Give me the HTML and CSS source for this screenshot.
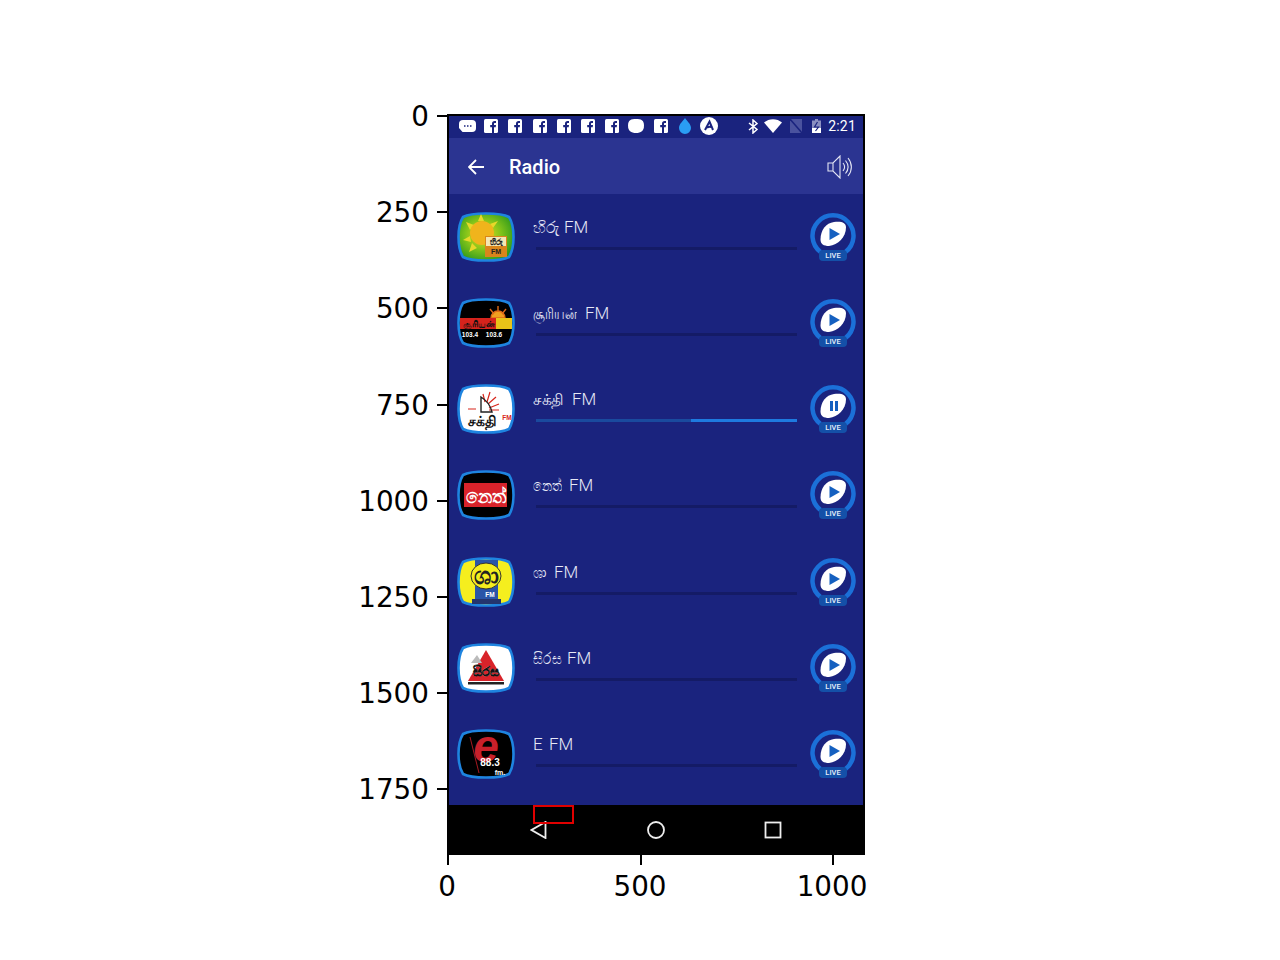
FILE: index.html
```html
<!DOCTYPE html>
<html lang="en">
<head>
  <meta charset="UTF-8">
  <meta name="viewport" content="width=device-width, initial-scale=1.0">
  <title>Radio</title>
  <link rel="stylesheet" href="styles.css">
</head>
<body>
  <svg class="defs" width="0" height="0">
    <defs>
      <radialGradient id="hiru-bg" cx="0.45" cy="0.45" r="0.6">
        <stop offset="0" stop-color="#e8e020"/>
        <stop offset="0.55" stop-color="#7fc21a"/>
        <stop offset="1" stop-color="#2f9a1c"/>
      </radialGradient>
    </defs>
    <symbol id="fb" viewBox="0 0 14 14">
      <rect width="14" height="14" rx="1.5" fill="#fff"/>
      <path d="M8 14V8.2H6.200V6H8V4.600C8 2.900 9 2 10.500 2H12v2.100h-1c-.8 0-1 .4-1 1V6h2l-.3 2.200H10V14z" fill="#1a237e"/>
    </symbol>
    <symbol id="shell" viewBox="0 0 58 50">
      <path d="M29 1.500C40 1.500 48 2.800 52 5C54.500 9 56.500 16 56.500 25C56.500 34 54.500 41 52 45C48 47.200 40 48.500 29 48.500C18 48.500 10 47.200 6 45C3.500 41 1.500 34 1.500 25C1.500 16 3.500 9 6 5C10 2.800 18 1.500 29 1.500Z" stroke="#1e84e0" stroke-width="2.600"/>
    </symbol>
    <symbol id="btn-ring" viewBox="0 0 46 50">
      <path d="M10.500 40A20.500 20.500 0 1 1 35.500 40" fill="none" stroke="#1b70d8" stroke-width="4.500"/>
      <path d="M24 10C32 9 36 11 36 15.500C36 25 28 33 19 34C13.500 34 10.500 32 10.500 27.500C10.500 18 16 11 24 10Z" fill="#fff"/>
      <rect x="9" y="38" width="28" height="11" rx="4" fill="#1450a8"/>
    </symbol>
  </svg>

  <main class="figure">
    <div class="axes">
      <div class="tick-y" style="top:-1px"><span>0</span></div>
      <div class="tick-y" style="top:95px"><span>250</span></div>
      <div class="tick-y" style="top:191px"><span>500</span></div>
      <div class="tick-y" style="top:288px"><span>750</span></div>
      <div class="tick-y" style="top:384px"><span>1000</span></div>
      <div class="tick-y" style="top:480px"><span>1250</span></div>
      <div class="tick-y" style="top:576px"><span>1500</span></div>
      <div class="tick-y" style="top:672px"><span>1750</span></div>

      <div class="status-bar">
        <div class="status-left">
          <div class="slot"><svg width="18" height="13" viewBox="0 0 18 13"><path d="M5 0h9a4 4 0 0 1 4 4v4a4 4 0 0 1-4 4H4.500L1 8V4a4 4 0 0 1 4-4z" fill="#fff"/><path d="M6 6h1.500M9 6h1.500M12 6h1.500" stroke="#1a237e" stroke-width="1.600"/></svg></div>
          <div class="slot"><svg class="fb"><use href="#fb"/></svg></div>
          <div class="slot"><svg class="fb"><use href="#fb"/></svg></div>
          <div class="slot"><svg class="fb"><use href="#fb"/></svg></div>
          <div class="slot"><svg class="fb"><use href="#fb"/></svg></div>
          <div class="slot"><svg class="fb"><use href="#fb"/></svg></div>
          <div class="slot"><svg class="fb"><use href="#fb"/></svg></div>
          <div class="slot"><svg width="16" height="14" viewBox="0 0 16 14"><path d="M8 0c5 0 8 1 8 6.500S13 14 8 14 0 12 0 6.500 3 0 8 0z" fill="#fff"/></svg></div>
          <div class="slot"><svg class="fb"><use href="#fb"/></svg></div>
          <div class="slot"><svg width="12" height="16" viewBox="0 0 12 16"><path d="M6 0c2 3 6 6 6 10a6 6 0 0 1-12 0C0 6 4 3 6 0z" fill="#2a9df4"/></svg></div>
          <div class="slot"><svg width="18" height="18" viewBox="0 0 18 18"><circle cx="9" cy="9" r="9" fill="#fff"/><path d="M5 13 9.500 4.500 13 13M7 10.500c2-1 4-1 5.500 0" fill="none" stroke="#1a237e" stroke-width="2"/></svg></div>
        </div>
        <div class="status-right">
          <svg width="10" height="15" viewBox="0 0 10 15"><path d="M1 4l8 6.500L5 14V1l4 3.500L1 11" fill="none" stroke="#fff" stroke-width="1.500"/></svg>
          <svg class="sys-wifi" width="18" height="14" viewBox="0 0 18 14"><path d="M0 3.500C5-1 13-1 18 3.500L9 14z" fill="#fff"/></svg>
          <svg class="sys-signal" width="12" height="14" viewBox="0 0 12 14"><path d="M0 0h12v14H0z" fill="#4a529e"/><path d="M0 0 12 14" stroke="#1a237e" stroke-width="1.500"/></svg>
          <svg class="sys-battery" width="9" height="14" viewBox="0 0 9 14"><path d="M3 0h3v1.500h3V14H0V1.500h3z" fill="#8a8fc0"/><path d="M0 9h9v5H0z" fill="#fff"/><path d="M5.500 3 2.500 8h4l-3 4" fill="none" stroke="#1a237e" stroke-width="1.200"/></svg>
          <span class="clock">2:21</span>
        </div>
      </div>

      <header class="toolbar">
        <svg class="back" width="16" height="16" viewBox="0 0 16 16"><path d="M16 8H1.500M8 1 1 8l7 7" fill="none" stroke="#fff" stroke-width="1.800"/></svg>
        <h1>Radio</h1>
        <svg class="volume" width="27" height="24" viewBox="0 0 27 24"><path d="M1 8h5l7-7v22l-7-7H1zM6 8v8" fill="none" stroke="#e4e6f4" stroke-width="1.100"/><path d="M16 8c2 2.500 2 5.500 0 8M18.500 5.500c3.200 4 3.200 9 0 13M21 3c4.500 5.500 4.500 12.500 0 18" fill="none" stroke="#e4e6f4" stroke-width="1.100"/></svg>
      </header>

      <section class="station-list">
        <article class="station">
          <svg class="logo" viewBox="0 0 58 50">
            <use href="#shell" fill="url(#hiru-bg)"/>
            <path d="M24 2l3 7h-6zM9 10l8 3-4 5zM41 9l-5 7-3-4zM6 28l7-4 1 6zM12 40l3-9 5 5z" fill="#e8d82a"/>
            <circle cx="25" cy="21" r="12" fill="#f0b41c"/>
            <rect x="28" y="24" width="22" height="21" fill="#d9851c"/>
            <rect x="29" y="25" width="20" height="9" fill="#f4e7b4"/>
            <text class="logo-text" x="39" y="33" font-size="8" font-weight="700" fill="#222">හිරු</text>
            <text class="logo-text" x="39" y="42" font-size="7" font-weight="700" fill="#222">FM</text>
          </svg>
          <div class="station-info">
            <div class="station-name"><span class="script script-hiru">හිරු</span>FM</div>
            <div class="seek"></div>
          </div>
          <div class="live-btn">
            <svg class="ring"><use href="#btn-ring"/></svg>
            <svg class="glyph" viewBox="0 0 12 12"><path d="M1.500 0 12 6 1.500 12z" fill="#1560c0"/></svg>
            <span class="live">LIVE</span>
          </div>
        </article>

        <article class="station">
          <svg class="logo" viewBox="0 0 58 50">
            <use href="#shell" fill="#000"/>
            <path d="M34 20a7 7 0 0 1 14 0zM41 8v6M33 11l4 5M49 11l-4 5" fill="#f0a020" stroke="#e06a18" stroke-width="1.400"/>
            <rect x="3" y="20" width="52" height="11" fill="#e9c418"/>
            <rect x="3" y="20" width="36" height="11" fill="#d6231c"/>
            <text class="logo-text" x="22" y="29" font-size="9" font-weight="700" fill="#111">சூரியன்</text>
            <text class="logo-text" x="13" y="39" font-size="6.500" font-weight="700" fill="#fff">103.4</text>
            <text class="logo-text" x="37" y="39" font-size="6.500" font-weight="700" fill="#fff">103.6</text>
          </svg>
          <div class="station-info">
            <div class="station-name"><span class="script script-surya">சூரியன்</span>FM</div>
            <div class="seek"></div>
          </div>
          <div class="live-btn">
            <svg class="ring"><use href="#btn-ring"/></svg>
            <svg class="glyph" viewBox="0 0 12 12"><path d="M1.500 0 12 6 1.500 12z" fill="#1560c0"/></svg>
            <span class="live">LIVE</span>
          </div>
        </article>

        <article class="station">
          <svg class="logo" viewBox="0 0 58 50">
            <use href="#shell" fill="#fff"/>
            <path d="M26 10l2 8M33 8l-3 10M39 13l-8 7M42 20l-10 4M42 26H32M11 25h8" fill="none" stroke="#d8261c" stroke-width="1.200"/>
            <path d="M24 13v15h11C33 20 29 16 24 13z" fill="none" stroke="#222" stroke-width="1.400"/>
            <text class="logo-text" x="25" y="42" font-size="14" font-weight="700" fill="#111">சக்தி</text>
            <text class="logo-text" x="50" y="36" font-size="6.500" font-weight="700" fill="#d8261c">FM</text>
          </svg>
          <div class="station-info">
            <div class="station-name"><span class="script script-sakthi">சக்தி</span>FM</div>
            <div class="seek"><div class="seek-buffer"></div><div class="seek-fill"></div></div>
          </div>
          <div class="live-btn">
            <svg class="ring"><use href="#btn-ring"/></svg>
            <svg class="glyph" viewBox="0 0 12 12"><path d="M2 1h3v10H2zM7 1h3v10H7z" fill="#1560c0"/></svg>
            <span class="live">LIVE</span>
          </div>
        </article>

        <article class="station">
          <svg class="logo" viewBox="0 0 58 50">
            <use href="#shell" fill="#000"/>
            <rect x="7" y="13" width="43" height="24" fill="#d8232a"/>
            <text class="logo-text" x="28.500" y="33" font-size="19" font-weight="700" fill="#fff" textLength="40" lengthAdjust="spacingAndGlyphs">නෙත්</text>
          </svg>
          <div class="station-info">
            <div class="station-name"><span class="script script-neth">නෙත්</span>FM</div>
            <div class="seek"></div>
          </div>
          <div class="live-btn">
            <svg class="ring"><use href="#btn-ring"/></svg>
            <svg class="glyph" viewBox="0 0 12 12"><path d="M1.500 0 12 6 1.500 12z" fill="#1560c0"/></svg>
            <span class="live">LIVE</span>
          </div>
        </article>

        <article class="station">
          <svg class="logo" viewBox="0 0 58 50">
            <use href="#shell" fill="#f5ee1e"/>
            <rect x="18" y="3" width="23" height="40" fill="#2a55a8"/>
            <rect x="15" y="42" width="29" height="5" fill="#24356e"/>
            <ellipse cx="29" cy="19" rx="15" ry="13" fill="#f5ee1e" stroke="#333" stroke-width="1"/>
            <text class="logo-text" x="29" y="27" font-size="24" font-weight="700" fill="#222">ශා</text>
            <text class="logo-text" x="33" y="40" font-size="6.500" font-weight="700" fill="#fff">FM</text>
          </svg>
          <div class="station-info">
            <div class="station-name"><span class="script script-sha">ශා</span>FM</div>
            <div class="seek"></div>
          </div>
          <div class="live-btn">
            <svg class="ring"><use href="#btn-ring"/></svg>
            <svg class="glyph" viewBox="0 0 12 12"><path d="M1.500 0 12 6 1.500 12z" fill="#1560c0"/></svg>
            <span class="live">LIVE</span>
          </div>
        </article>

        <article class="station">
          <svg class="logo" viewBox="0 0 58 50">
            <use href="#shell" fill="#fff"/>
            <path d="M29 7 47 38H11z" fill="#d8232a"/>
            <path d="M14 20 20 12 25 20z" fill="#bbb"/>
            <text class="logo-text" x="29" y="33" font-size="13" font-weight="700" fill="#fff" stroke="#111" stroke-width="0.400">සිරස</text>
            <rect x="11" y="39" width="36" height="2.500" fill="#222"/>
          </svg>
          <div class="station-info">
            <div class="station-name"><span class="script script-sirasa">සිරස</span>FM</div>
            <div class="seek"></div>
          </div>
          <div class="live-btn">
            <svg class="ring"><use href="#btn-ring"/></svg>
            <svg class="glyph" viewBox="0 0 12 12"><path d="M1.500 0 12 6 1.500 12z" fill="#1560c0"/></svg>
            <span class="live">LIVE</span>
          </div>
        </article>

        <article class="station">
          <svg class="logo" viewBox="0 0 58 50">
            <use href="#shell" fill="#000"/>
            <path d="M13 8 22 44" fill="none" stroke="#a81820" stroke-width="1"/>
            <text class="logo-text logo-e" x="29" y="33" font-size="46" font-weight="700" fill="#c8202a">e</text>
            <text class="logo-text" x="33" y="37" font-size="10" font-weight="700" fill="#fff">88.3</text>
            <text class="logo-text" x="43" y="46" font-size="7" font-weight="700" fill="#fff">fm.</text>
          </svg>
          <div class="station-info">
            <div class="station-name"><span class="script script-e">E</span>FM</div>
            <div class="seek"></div>
          </div>
          <div class="live-btn">
            <svg class="ring"><use href="#btn-ring"/></svg>
            <svg class="glyph" viewBox="0 0 12 12"><path d="M1.500 0 12 6 1.500 12z" fill="#1560c0"/></svg>
            <span class="live">LIVE</span>
          </div>
        </article>
      </section>

      <nav class="nav-bar">
        <svg class="nav-icon" viewBox="0 0 18 18"><path d="M15.500 1v16L1.500 9z" fill="none" stroke="#eee" stroke-width="1.800"/></svg>
        <svg class="nav-icon" viewBox="0 0 18 18"><circle cx="9" cy="9" r="8" fill="none" stroke="#eee" stroke-width="1.800"/></svg>
        <svg class="nav-icon" viewBox="0 0 18 18"><rect x="1.500" y="1.500" width="15" height="15" fill="none" stroke="#eee" stroke-width="1.800"/></svg>
      </nav>

      <div class="highlight"></div>
    </div>

    <div class="x-axis">
      <div class="tick-x" style="left:0"><span>0</span></div>
      <div class="tick-x" style="left:193px"><span>500</span></div>
      <div class="tick-x" style="left:385px"><span>1000</span></div>
    </div>
  </main>
</body>
</html>
```

FILE: styles.css
```css
body {
  margin: 0;
  background: #fff;
  font-family: Roboto, "Noto Sans", sans-serif;
}
.defs {
  position: absolute;
}
.figure {
  padding: 114px 0 0 447px;
}
.axes {
  position: relative;
  box-sizing: border-box;
  width: 418px;
  height: 741px;
  border: 2px solid #000;
  display: flex;
  flex-direction: column;
}

/* plot ticks */
.tick-y, .tick-x {
  position: absolute;
  background: #000;
  font-family: "DejaVu Sans", sans-serif;
  font-size: 27.8px;
  line-height: 1;
  color: #000;
}
.tick-y {
  left: -12px;
  width: 10px;
  height: 2px;
}
.tick-y span {
  position: absolute;
  right: 18px;
  top: -12px;
}
.x-axis {
  position: relative;
  width: 418px;
  height: 50px;
}
.tick-x {
  top: 0;
  width: 2px;
  height: 10px;
}
.tick-x span {
  position: absolute;
  left: 0;
  top: 18px;
  transform: translateX(-50%);
}

/* status bar */
.status-bar {
  height: 22px;
  background: #1a237e;
  display: flex;
  align-items: center;
  justify-content: space-between;
  padding: 0 7px 2px 6px;
  box-sizing: border-box;
  color: #fff;
}
.status-left {
  display: flex;
  align-items: center;
}
.slot {
  width: 24.2px;
  height: 20px;
  display: flex;
  align-items: center;
  justify-content: center;
}
.fb {
  width: 14px;
  height: 14px;
}
.status-right {
  display: flex;
  align-items: center;
}
.sys-wifi {
  margin-left: 6px;
}
.sys-signal {
  margin-left: 8px;
}
.sys-battery {
  margin-left: 10px;
}
.clock {
  font-size: 14px;
  margin-left: 7px;
  letter-spacing: 0.2px;
}

/* toolbar */
.toolbar {
  height: 56px;
  box-sizing: border-box;
  background: #2b3491;
  display: flex;
  align-items: center;
  padding: 2px 9px 0 19px;
  color: #fff;
}
.toolbar h1 {
  flex: 1;
  margin: 0 0 0 25px;
  font-size: 20px;
  font-weight: 500;
}

/* stations */
.station-list {
  flex: 1;
  background: #1a237e;
}
.station {
  height: 86.17px;
  box-sizing: border-box;
  padding: 18px 7px 0 8px;
  display: flex;
  align-items: flex-start;
}
.logo {
  width: 58px;
  height: 50px;
  flex: none;
  overflow: visible;
}
.logo-text {
  font-family: "Liberation Sans", "Noto Sans", sans-serif;
  text-anchor: middle;
}
.logo-e {
  font-style: italic;
}
.station-info {
  flex: 1;
  margin: 5px 13px 0 18px;
}
.station-name {
  font-family: Roboto, "Noto Sans", sans-serif;
  font-size: 17px;
  font-weight: 300;
  line-height: 20px;
  color: #e6e8f6;
  white-space: nowrap;
}

/* the script part is set to the width it has in the app's own font */
.script {
  display: inline-block;
  font-family: "Noto Sans", sans-serif;
  font-size: 16px;
  transform-origin: left center;
}
.script-hiru {
  width: 31px;
}
.script-surya {
  width: 52px;
  transform: scaleX(0.77);
}
.script-sakthi {
  width: 39px;
  transform: scaleX(0.95);
}
.script-neth {
  width: 36px;
  transform: scaleX(0.78);
}
.script-sha {
  width: 21px;
  transform: scaleX(0.85);
}
.script-sirasa {
  width: 34px;
  transform: scaleX(0.85);
}
.script-e {
  width: 16px;
  font-family: Roboto, sans-serif;
  font-weight: 300;
  font-size: 17px;
}
.seek {
  display: flex;
  height: 3px;
  margin: 10px 0 0 3px;
  background: #141b66;
}
.seek-buffer {
  width: 155px;
  background: #1a4a9e;
}
.seek-fill {
  flex: 1;
  background: #1e7ae0;
}
.live-btn {
  position: relative;
  width: 46px;
  height: 50px;
  flex: none;
}
.ring {
  width: 46px;
  height: 50px;
  display: block;
}
.glyph {
  position: absolute;
  left: 18px;
  top: 16px;
  width: 12px;
  height: 12px;
}
.live {
  position: absolute;
  left: 9px;
  top: 38px;
  width: 28px;
  text-align: center;
  font-size: 7.500px;
  font-weight: 500;
  line-height: 11px;
  color: #e8eefa;
}

/* nav bar */
.nav-bar {
  height: 48px;
  box-sizing: border-box;
  padding-top: 2px;
  background: #000;
  display: flex;
  align-items: center;
  justify-content: center;
  gap: 99px;
}
.nav-icon {
  width: 18px;
  height: 18px;
}
.highlight {
  position: absolute;
  left: 84px;
  top: 689px;
  width: 41px;
  height: 19px;
  box-sizing: border-box;
  border: 2.500px solid #e00000;
}
```
